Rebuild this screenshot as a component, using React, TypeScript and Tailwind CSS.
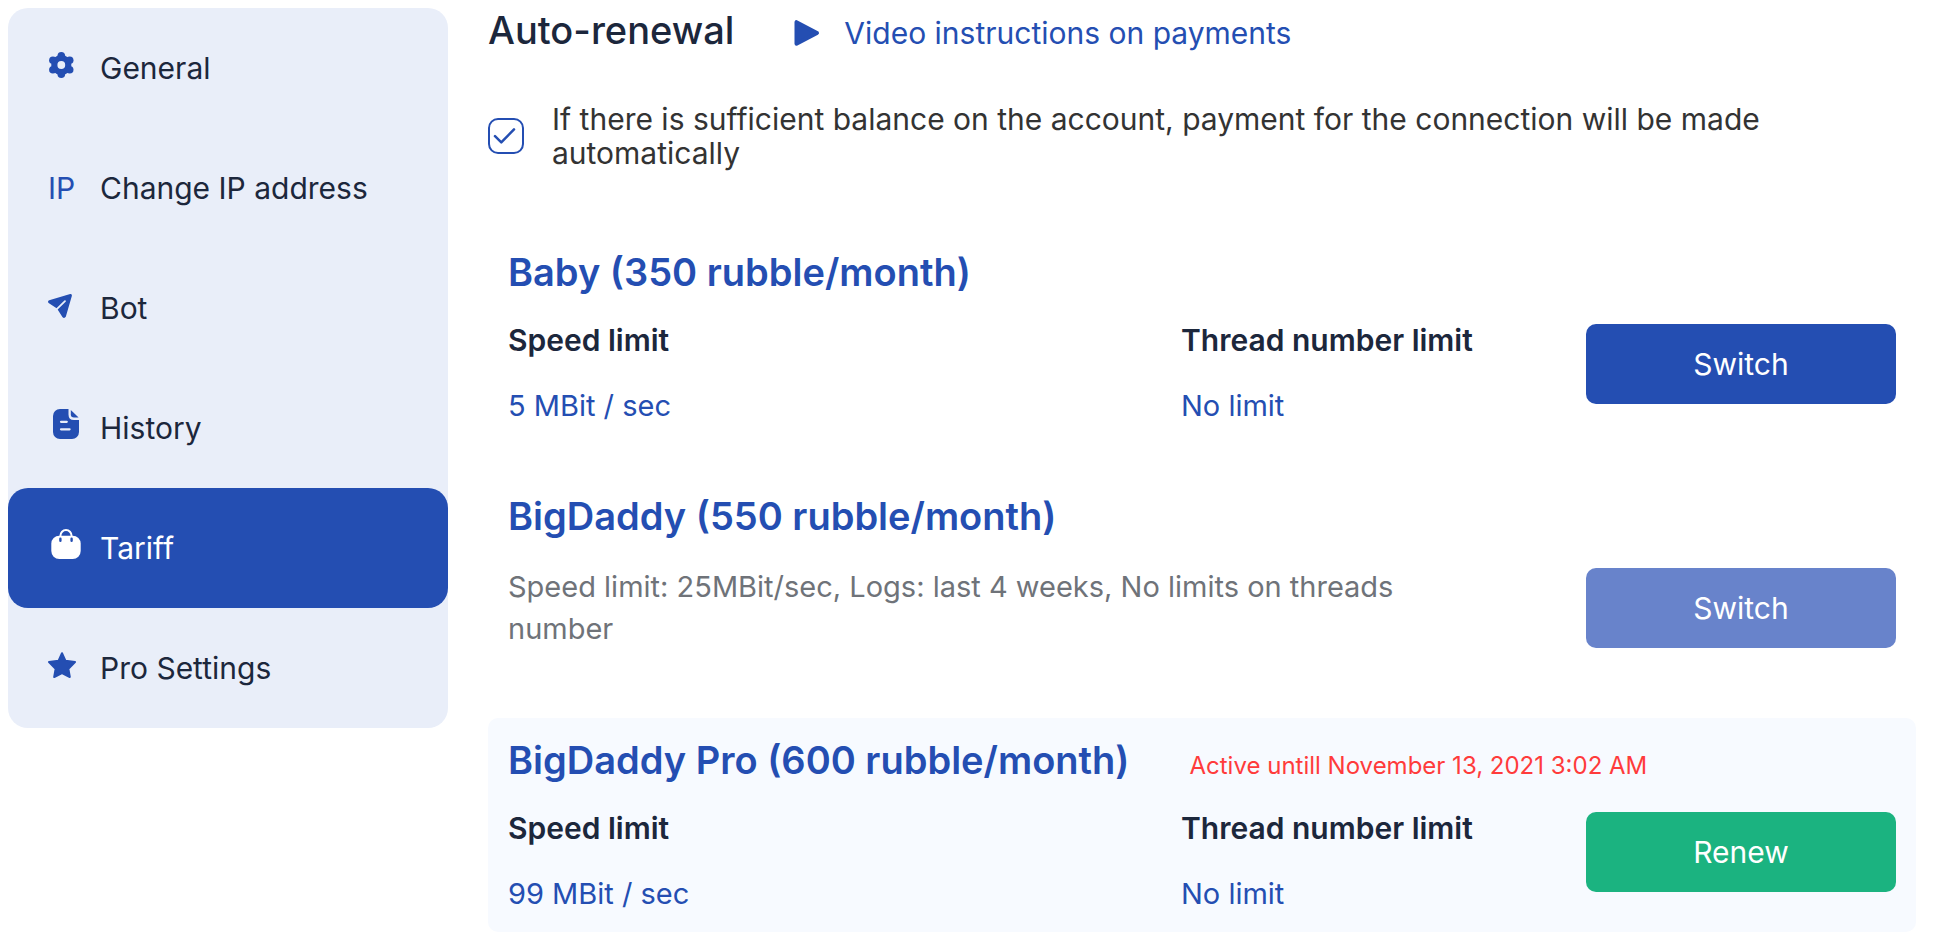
import React, { useState } from 'react';
import clsx from 'clsx';

type IconProps = { className?: string };

const iconClass = 'w-9 h-9 overflow-visible fill-current shrink-0';

function GearIcon() {
  return (
    <svg viewBox="0 0 36 36" className={iconClass} aria-hidden="true">
      <circle cx="13.3" cy="15" r="7" fill="none" stroke="currentColor" strokeWidth="6.2" />
      <circle cx="13.3" cy="5.8" r="3.8" />
      <circle cx="13.3" cy="24.2" r="3.8" />
      <circle cx="4.9" cy="10.3" r="3.8" />
      <circle cx="21.7" cy="10.3" r="3.8" />
      <circle cx="4.9" cy="19.7" r="3.8" />
      <circle cx="21.7" cy="19.7" r="3.8" />
    </svg>
  );
}

function PlaneIcon() {
  return (
    <svg viewBox="0 0 36 36" className={iconClass} aria-hidden="true">
      <path d="M1.2 10.2L22.2 4.1Q24.2 3.8 23.9 5.8L17.8 26.8Q16.2 29 14.4 27L9 18.4L0.6 13Q-0.8 11.2 1.2 10.2Z" />
      <path d="M17 11.2L7.5 20.4" fill="none" stroke="#e9eef9" strokeWidth="1.8" strokeLinecap="round" />
    </svg>
  );
}

function DocumentIcon() {
  return (
    <svg viewBox="0 0 36 36" className={iconClass} aria-hidden="true">
      <path d="M12 -1H20.5V4.5Q20.5 10 26 10H31V22a7 7 0 0 1-7 7H12a7 7 0 0 1-7-7V6a7 7 0 0 1 7-7Z" />
      <path d="M22.8 0L30.6 7.4H26Q22.8 7.4 22.8 4.4Z" />
      <path d="M13 11.8H18.8M13 19.3H21.6" fill="none" stroke="#e9eef9" strokeWidth="2.2" strokeLinecap="round" />
    </svg>
  );
}

function BagIcon() {
  return (
    <svg viewBox="0 0 36 36" className={iconClass} aria-hidden="true">
      <rect x="3.3" y="5.7" width="29.4" height="23.3" rx="8" />
      <path d="M12.4 9V6a5.6 6 0 0 1 11.2 0V9" fill="none" stroke="currentColor" strokeWidth="2" />
      <path d="M12.4 8.8V10.7M23.6 8.8V10.7" fill="none" stroke="#244eb2" strokeWidth="2.4" strokeLinecap="round" />
    </svg>
  );
}

function StarIcon() {
  return (
    <svg viewBox="0 0 36 36" className={iconClass} aria-hidden="true">
      <path
        d="M14 3.2L17.5 10.8 27 12 20.4 18.8 21.8 27 14 23.2 6.2 27 7.6 18.8 1 12 10.5 10.8Z"
        stroke="currentColor"
        strokeWidth="2"
        strokeLinejoin="round"
      />
    </svg>
  );
}

function PlayIcon({ className }: IconProps) {
  return (
    <svg viewBox="0 0 26 28" className={className} aria-hidden="true">
      <path
        d="M2.5 3.2V24.8L23 14Z"
        fill="currentColor"
        stroke="currentColor"
        strokeWidth="4"
        strokeLinejoin="round"
      />
    </svg>
  );
}

const menu = [
  { label: 'General', icon: <GearIcon /> },
  { label: 'Change IP address', icon: <span className="w-9 shrink-0">IP</span> },
  { label: 'Bot', icon: <PlaneIcon /> },
  { label: 'History', icon: <DocumentIcon /> },
  { label: 'Tariff', icon: <BagIcon /> },
  { label: 'Pro Settings', icon: <StarIcon /> },
];

interface Tariff {
  name: string;
  speed?: string;
  threads?: string;
  description?: string;
  activeUntil?: string;
  disabled?: boolean;
}

const tariffs: Tariff[] = [
  { name: 'Baby (350 rubble/month)', speed: '5 MBit / sec', threads: 'No limit' },
  {
    name: 'BigDaddy (550 rubble/month)',
    description: 'Speed limit: 25MBit/sec, Logs: last 4 weeks, No limits on threads number',
    disabled: true,
  },
  {
    name: 'BigDaddy Pro (600 rubble/month)',
    speed: '99 MBit / sec',
    threads: 'No limit',
    activeUntil: 'Active untill November 13, 2021 3:02 AM',
  },
];

function TariffCard({ tariff }: { tariff: Tariff }) {
  const active = Boolean(tariff.activeUntil);

  return (
    <section className={clsx('rounded-[10px] p-5', active && 'bg-[#f7faff]')}>
      <div className="flex items-baseline gap-15">
        <h2 className="text-[38px] leading-11 font-semibold text-[#244eb2]">{tariff.name}</h2>
        {active && <span className="text-[24px] leading-8 text-[#ff3b3b]">{tariff.activeUntil}</span>}
      </div>

      <div className="mt-[10px] min-h-[120px] flex items-center gap-[100px]">
        {tariff.description ? (
          <p className="flex-1 text-[29px] leading-[42px] text-[#6f7379]">{tariff.description}</p>
        ) : (
          <dl className="flex-1 self-end flex">
            <div className="flex-1">
              <dt className="leading-9 font-semibold text-[#1c273c]">Speed limit</dt>
              <dd className="mt-[30px] text-[29px] leading-9 text-[#244eb2]">{tariff.speed}</dd>
            </div>
            <div className="w-[305px]">
              <dt className="leading-9 font-semibold text-[#1c273c]">Thread number limit</dt>
              <dd className="mt-[30px] text-[29px] leading-9 text-[#244eb2]">{tariff.threads}</dd>
            </div>
          </dl>
        )}
        <button
          type="button"
          disabled={tariff.disabled}
          className={clsx(
            'w-[310px] h-20 shrink-0 rounded-[10px] text-white',
            active ? 'bg-[#1bb380]' : tariff.disabled ? 'bg-[#6883cb]' : 'bg-[#244eb2]'
          )}
        >
          {active ? 'Renew' : 'Switch'}
        </button>
      </div>
    </section>
  );
}

function App() {
  const [autoRenewal, setAutoRenewal] = useState(true);

  return (
    <div className="min-h-screen bg-white flex items-start gap-10 pt-2 pl-2 pr-[26px] font-['Inter',sans-serif] text-[30px]">
      {/* Sidebar */}
      <nav className="w-[440px] shrink-0 rounded-[20px] bg-[#e9eef9]">
        {menu.map((item) => {
          const selected = item.label === 'Tariff';
          return (
            <a
              key={item.label}
              href="#"
              className={clsx(
                'h-30 pl-10 flex items-center gap-4 rounded-[20px]',
                selected ? 'bg-[#244eb2] text-white' : 'text-[#244eb2]'
              )}
            >
              {item.icon}
              <span className={selected ? 'text-white' : 'text-[#1c273c]'}>{item.label}</span>
            </a>
          );
        })}
      </nav>

      {/* Content */}
      <main className="flex-1 min-w-0">
        <header className="flex items-baseline gap-15">
          <h1 className="text-[38px] leading-11 font-medium text-[#1c273c]">Auto-renewal</h1>
          <a href="#" className="flex items-center gap-6 leading-9 text-[#244eb2]">
            <PlayIcon className="w-[26px] h-7" />
            <span className="self-baseline">Video instructions on payments</span>
          </a>
        </header>

        <label className="mt-[50px] flex items-center gap-7 text-[#333]">
          <span className="relative w-9 h-9 shrink-0">
            <input
              type="checkbox"
              checked={autoRenewal}
              onChange={(e) => setAutoRenewal(e.target.checked)}
              className="block w-9 h-9 appearance-none rounded-[10px] border-2 border-[#244eb2] bg-white"
            />
            {autoRenewal && (
              <svg viewBox="0 0 36 36" className="absolute inset-0 pointer-events-none" aria-hidden="true">
                <path
                  d="M7 18.2L13.3 24.4L26 11.4"
                  fill="none"
                  stroke="#244eb2"
                  strokeWidth="2.5"
                  strokeLinecap="round"
                  strokeLinejoin="round"
                />
              </svg>
            )}
          </span>
          <span className="leading-[34px]">
            If there is sufficient balance on the account, payment for the connection will be made automatically
          </span>
        </label>

        <div className="mt-15 flex flex-col gap-[30px]">
          {tariffs.map((tariff) => (
            <TariffCard key={tariff.name} tariff={tariff} />
          ))}
        </div>
      </main>
    </div>
  );
}

export default App;
